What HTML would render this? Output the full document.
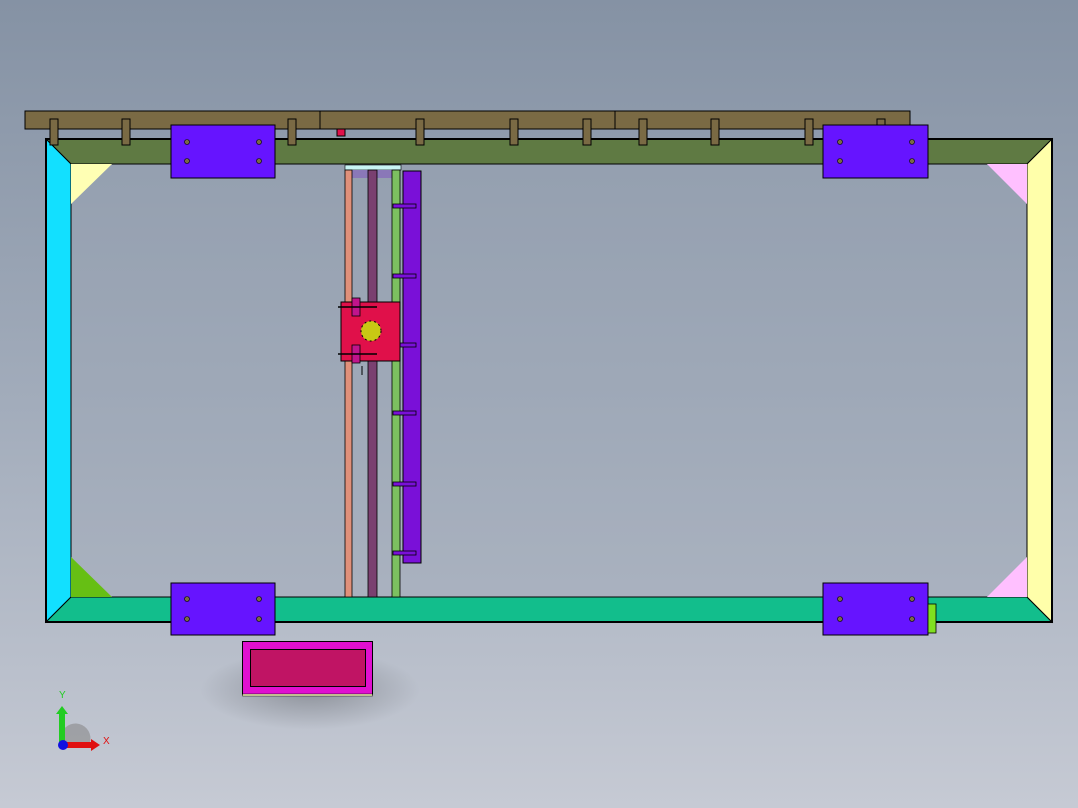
<!DOCTYPE html>
<html><head><style>html,body{margin:0;padding:0;overflow:hidden}svg{display:block}</style></head>
<body>
<svg width="1078" height="808" viewBox="0 0 1078 808" xmlns="http://www.w3.org/2000/svg" font-family="Liberation Sans, sans-serif">
<defs>
<linearGradient id="bg" x1="0" y1="0" x2="0" y2="1">
<stop offset="0" stop-color="#8592a4"/><stop offset="0.5" stop-color="#a2acbb"/><stop offset="1" stop-color="#c6cad4"/>
</linearGradient>
<radialGradient id="sh" cx="0.5" cy="0.5" r="0.5"><stop offset="0" stop-color="#000" stop-opacity="0.25"/><stop offset="1" stop-color="#000" stop-opacity="0"/></radialGradient>
</defs>
<rect width="1078" height="808" fill="url(#bg)"/>
<!-- inner floor shading -->
<rect x="71" y="164" width="956" height="433" fill="#9aa4b3" opacity="0.4"/>
<ellipse cx="310" cy="690" rx="110" ry="40" fill="url(#sh)"/>
<!-- top wood rail -->
<rect x="25" y="111" width="885" height="18" fill="#7a6a44" stroke="#000" stroke-width="1"/>
<line x1="320" y1="111" x2="320" y2="129" stroke="#000"/>
<line x1="615" y1="111" x2="615" y2="129" stroke="#000"/>
<!-- frame -->
<polygon points="46,139 1052,139 1027,164 71,164" fill="#5f7a43" stroke="#000" stroke-width="1"/>
<polygon points="46,139 71,164 71,597 46,622" fill="#12e0ff" stroke="#000" stroke-width="1"/>
<polygon points="46,622 71,597 1027,597 1052,622" fill="#12be8c" stroke="#000" stroke-width="1"/>
<polygon points="1052,139 1027,164 1027,597 1052,622" fill="#ffffaa" stroke="#000" stroke-width="1"/>
<rect x="46" y="139" width="1006" height="483" fill="none" stroke="#000" stroke-width="2"/>
<polygon points="71,164 112,164 71,204" fill="#ffffb4"/>
<polygon points="1027,164 987,164 1027,204" fill="#ffc0ff"/>
<polygon points="71,597 71,557 112,597" fill="#66bf14"/>
<polygon points="1027,597 1027,557 987,597" fill="#ffc0ff"/>
<!-- posts -->
<g fill="#7a6a44" stroke="#000" stroke-width="1">
<rect x="50" y="119" width="8" height="26"/><rect x="122" y="119" width="8" height="26"/><rect x="288" y="119" width="8" height="26"/>
<rect x="416" y="119" width="8" height="26"/><rect x="510" y="119" width="8" height="26"/><rect x="583" y="119" width="8" height="26"/>
<rect x="639" y="119" width="8" height="26"/><rect x="711" y="119" width="8" height="26"/><rect x="805" y="119" width="8" height="26"/><rect x="877" y="119" width="8" height="26"/>
</g>
<rect x="337" y="129" width="8" height="7" fill="#e0104a" stroke="#000"/>
<!-- vertical rails -->
<rect x="345" y="165" width="56" height="5" fill="#c8f4f4" stroke="#000" stroke-width="0.6"/>
<rect x="352" y="170" width="40" height="8" fill="#8a78b8"/>
<rect x="345" y="170" width="7" height="427" fill="#e0907a" stroke="#000" stroke-width="0.8"/>
<rect x="368" y="170" width="9" height="427" fill="#7a4070" stroke="#000" stroke-width="0.8"/>
<rect x="392" y="170" width="8" height="427" fill="#7cc060" stroke="#000" stroke-width="0.8"/>
<rect x="403" y="171" width="18" height="392" fill="#7a10d8" stroke="#000" stroke-width="1"/>
<g fill="#7a10d8" stroke="#000" stroke-width="0.8">
<rect x="393" y="204" width="23" height="4"/><rect x="393" y="274" width="23" height="4"/><rect x="393" y="343" width="23" height="4"/>
<rect x="393" y="411" width="23" height="4"/><rect x="393" y="482" width="23" height="4"/><rect x="393" y="551" width="23" height="4"/>
</g>
<!-- carriage -->
<rect x="341" y="302" width="59" height="59" fill="#e0104a" stroke="#000" stroke-width="1"/>
<rect x="352" y="298" width="8" height="18" fill="#c0148c" stroke="#000" stroke-width="0.8"/>
<rect x="352" y="345" width="8" height="18" fill="#c0148c" stroke="#000" stroke-width="0.8"/>
<line x1="338" y1="307" x2="377" y2="307" stroke="#000" stroke-width="1.5"/>
<line x1="338" y1="354" x2="377" y2="354" stroke="#000" stroke-width="1.5"/>
<circle cx="371" cy="331" r="10" fill="#c8c814" stroke="#000" stroke-width="1" stroke-dasharray="2 3"/>
<line x1="362" y1="366" x2="362" y2="375" stroke="#000"/>
<!-- plates -->
<g fill="#6614ff" stroke="#000" stroke-width="1">
<rect x="171" y="125" width="104" height="53"/><rect x="823" y="125" width="105" height="53"/>
<rect x="171" y="583" width="104" height="52"/><rect x="823" y="583" width="105" height="52"/>
</g>
<rect x="928" y="604" width="8" height="29" fill="#80e020" stroke="#000" stroke-width="0.8"/>
<g fill="#7a6a44" stroke="#000" stroke-width="0.6">
<circle cx="187" cy="142" r="2.5"/><circle cx="259" cy="142" r="2.5"/><circle cx="187" cy="161" r="2.5"/><circle cx="259" cy="161" r="2.5"/>
<circle cx="840" cy="142" r="2.5"/><circle cx="912" cy="142" r="2.5"/><circle cx="840" cy="161" r="2.5"/><circle cx="912" cy="161" r="2.5"/>
<circle cx="187" cy="599" r="2.5"/><circle cx="259" cy="599" r="2.5"/><circle cx="187" cy="619" r="2.5"/><circle cx="259" cy="619" r="2.5"/>
<circle cx="840" cy="599" r="2.5"/><circle cx="912" cy="599" r="2.5"/><circle cx="840" cy="619" r="2.5"/><circle cx="912" cy="619" r="2.5"/>
</g>
<!-- pink box -->
<rect x="242.5" y="641.5" width="130" height="53" fill="#e010d0" stroke="#000" stroke-width="1"/>
<rect x="250.5" y="649.5" width="115" height="37" fill="#c01464" stroke="#000" stroke-width="1"/>
<rect x="242.5" y="694" width="130" height="2" fill="#ffffc0" stroke="#000" stroke-width="0.5"/>
<!-- triad -->
<path d="M62,745 L62,732 A14,14 0 0 1 89,745 Z" fill="#888" opacity="0.6"/>
<rect x="59" y="713" width="6" height="32" fill="#22cc22"/>
<polygon points="56,714 62,706 68,714" fill="#22cc22"/>
<rect x="62" y="742" width="30" height="6" fill="#e01010"/>
<polygon points="91,739 100,745 91,751" fill="#e01010"/>
<circle cx="63" cy="745" r="5" fill="#1010e0"/>
<text x="59" y="698" font-size="10" fill="#22cc22">Y</text>
<text x="103" y="744" font-size="10" fill="#e01010">X</text>
</svg>
</body></html>
